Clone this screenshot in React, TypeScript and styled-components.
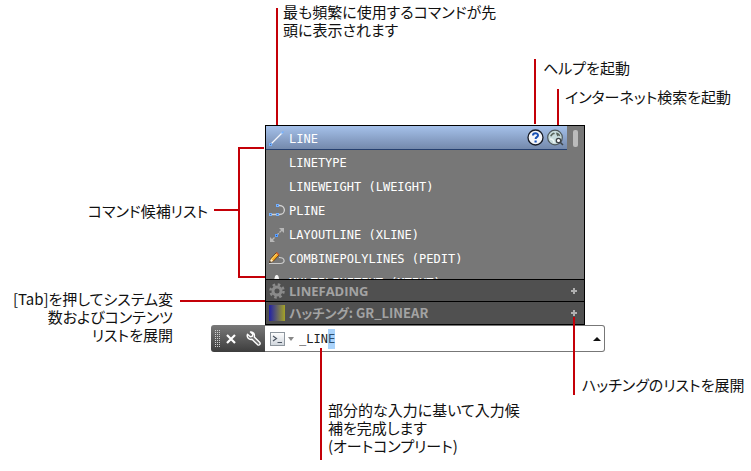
import React, { useEffect, useRef } from "react";
import styled, { createGlobalStyle } from "styled-components";

const RED = "#c40008";

const GlobalStyle = createGlobalStyle`
  *, *::before, *::after { box-sizing: border-box; }
  body { margin: 0; background: #fff; }
`;

const Figure = styled.main`
  position: relative;
  min-height: 471px;
  padding: 125px 0 0 211px;
  overflow: hidden;
  font-family: "Noto Sans CJK JP", sans-serif;
`;

const SuggestionPanel = styled.section`
  width: 320px;
  margin-left: 54px;
  border: 1px solid #000;
  background: #000;
  display: flex;
  flex-direction: column;
  gap: 1px;
`;

const ListArea = styled.div`
  display: flex;
  height: 153px;
  background: #777;
  overflow: hidden;
`;

const CommandList = styled.ul`
  flex: 1;
  margin: 0;
  padding: 0;
  list-style: none;
`;

const CommandRow = styled.li<{ $active?: boolean }>`
  display: flex;
  align-items: center;
  height: 24px;
  padding-right: 3px;
  background: ${(p) => (p.$active ? "linear-gradient(#a5c1ea, #7489ac)" : "transparent")};
  border-bottom: 1px solid ${(p) => (p.$active ? "#26406f" : "transparent")};
`;

const CommandButton = styled.button`
  flex: 1;
  display: flex;
  align-items: center;
  height: 100%;
  padding: 3px 0 0;
  border: 0;
  background: none;
  color: #fff;
  font: 12px/20px "DejaVu Sans Mono", monospace;
  text-align: left;
  white-space: pre;
`;

const IconSlot = styled.span`
  display: flex;
  width: 23px;
  padding-left: 3px;
`;

const RoundButton = styled.button`
  display: flex;
  padding: 0;
  margin-left: 3px;
  border: 0;
  background: none;
`;

const Scrollbar = styled.div`
  width: 17px;
  padding: 4px 6px 0 6px;
`;

const Thumb = styled.div`
  width: 5px;
  height: 17px;
  border-radius: 2px;
  background: #bbb;
`;

const CategoryRow = styled.button<{ $japanese?: boolean }>`
  display: flex;
  align-items: center;
  height: ${(p) => (p.$japanese ? 22 : 21)}px;
  padding: 0 6px 0 3px;
  border: 0;
  background: #505050;
  color: #a3a3a3;
  font: 700 13px/20px ${(p) => (p.$japanese ? '"Noto Sans CJK JP"' : '"Open Sans"')}, sans-serif;
  font-feature-settings: "palt";
  text-align: left;

  & > span { flex: 1; margin-left: 4px; }
`;

const CommandBar = styled.form`
  display: flex;
  width: 394px;
  height: 27px;
  border-radius: 3px;
`;

const BarTools = styled.div`
  display: flex;
  align-items: center;
  width: 54px;
  padding-left: 4px;
  border-radius: 3px 0 0 3px;
  background: linear-gradient(#797979, #3d3d3d);
`;

const ToolButton = styled.button<{ $gap: number }>`
  display: flex;
  padding: 0;
  margin-left: ${(p) => p.$gap}px;
  border: 0;
  background: none;
`;

const Entry = styled.div`
  flex: 1;
  display: flex;
  align-items: center;
  min-width: 0;
  padding: 0 3px 0 5px;
  border: 1px solid #777;
  border-left: 0;
  border-radius: 0 3px 3px 0;
  background: #fff;
`;

const CommandInput = styled.input`
  flex: 1;
  min-width: 0;
  height: 20px;
  margin-left: 5px;
  padding: 0;
  border: 0;
  outline: 0;
  background: none;
  color: #222;
  font: 12px/20px "DejaVu Sans Mono", monospace;

  &::selection { background: #a9d3fb; color: #31506f; }
`;

const Callout = styled.p<{ $x: number; $y: number; $w: number; $end?: boolean }>`
  position: absolute;
  left: ${(p) => p.$x}px;
  top: ${(p) => p.$y}px;
  width: ${(p) => p.$w}px;
  margin: 0;
  color: #111;
  font-size: 15px;
  line-height: 18px;
  font-feature-settings: "palt";
  text-align: ${(p) => (p.$end ? "right" : "left")};
  white-space: nowrap;
`;

const Leaders = styled.svg`
  position: absolute;
  left: 0;
  top: 0;
  pointer-events: none;
`;

const Svg = ({ w, h, children }: { w: number; h: number; children: React.ReactNode }) => (
  <svg width={w} height={h} viewBox={`0 0 ${w} ${h}`} aria-hidden="true">{children}</svg>
);

const Node = ({ x, y }: { x: number; y: number }) => (
  <rect x={x + 0.5} y={y + 0.5} width="2" height="2" fill="#4a6ea8" stroke="#75b1ff" />
);

const LineIcon = () => (
  <Svg w={16} h={16}>
    <path d="M2.5 12.5 13.5 1.500" stroke="#f6f8fc" strokeWidth="1.2" />
    <Node x={0} y={12} />
    <path d="M12.500 2.500l2-2" stroke="#75b1ff" strokeWidth="1.5" />
  </Svg>
);

const PlineIcon = () => (
  <Svg w={16} h={16}>
    <path d="M2 11.5H10.500C17 11.500 17 2.500 10.500 2.500H8" fill="none" stroke="#d2d2d2" strokeWidth="1.3" />
    <Node x={0} y={10} /><Node x={7} y={10} /><Node x={7} y={1} />
  </Svg>
);

const XlineIcon = () => (
  <Svg w={16} h={16}>
    <path d="M2 14 14 2" stroke="#b7b7b7" strokeWidth="1.3" strokeDasharray="5 1" />
    <path d="M10 1h5v5zM1 10v5h5z" fill="#b7b7b7" />
    <rect x="6.5" y="7.5" width="2" height="2" fill="#1c55ac" stroke="#5ba0ff" />
  </Svg>
);

const PeditIcon = () => (
  <Svg w={16} h={16}>
    <path d="M0 12.500H11.500C17 12 16 6.500 10 6.500" fill="none" stroke="#ccc" strokeWidth="1.2" />
    <path d="M.5 11.500 2 7.500 7.500 1.500 10 4 4.500 10z" fill="#f7aa20" stroke="#5a2c05" strokeWidth=".8" />
    <path d="M2.700 8 7.800 2.500" stroke="#ffe58a" />
    <path d="M7 2 8 1 10.500 3.500 9.500 4.500z" fill="#c45a32" />
    <path d="M.5 11.500 2 7.800 4.300 10z" fill="#fff0cf" />
    <path d="M0 12l1-2 1 1z" fill="#111" />
  </Svg>
);

const TextIcon = () => (
  <Svg w={16} h={16}><path d="M2 16 6 1.500C6.500-.5 9-.5 9.500 1.500L13 16z" fill="#f4f4f4" /></Svg>
);

const HelpIcon = () => (
  <Svg w={17} h={17}>
    <circle cx="8.500" cy="8.500" r="7.500" fill="#f4f6fa" stroke="#171b25" strokeWidth="1.300" />
    <path d="M6 6.500C6 3.500 11 3.500 11 6.300 11 8.300 8.600 8 8.600 10" fill="none" stroke="#1750b5" strokeWidth="2" />
    <rect x="7.500" y="11.500" width="2.200" height="2" fill="#1750b5" />
  </Svg>
);

const GlobeIcon = () => (
  <Svg w={17} h={17}>
    <circle cx="8" cy="8.500" r="7.300" fill="#c8dcdd" stroke="#4e585c" strokeWidth="1.200" />
    <path d="M3 7C4 5 5 4 7 3.500L8 5 6 5.500 4.500 7.500zM9 3.500c2 0 4 1.500 4.500 4l-2-1-1 1-1-2z" fill="#58645c" />
    <path d="M3 10c2 0 4 1 4 4" stroke="#edf7f4" fill="none" strokeWidth="1.500" />
    <circle cx="11.500" cy="11.500" r="2.200" fill="#fff" stroke="#3d4348" strokeWidth="1.300" />
    <path d="m13 13 3 3" stroke="#3d4348" strokeWidth="1.500" />
  </Svg>
);

const GearIcon = () => (
  <Svg w={16} h={16}>
    <circle cx="8" cy="8" r="6.500" fill="none" stroke="#8b8b8b" strokeWidth="2.500" strokeDasharray="2.550 2.550" />
    <circle cx="8" cy="8" r="4" fill="none" stroke="#8b8b8b" strokeWidth="3" />
  </Svg>
);

const HatchIcon = () => (
  <Svg w={16} h={16}>
    <defs><linearGradient id="hatch"><stop stopColor="#2020a8" /><stop offset="1" stopColor="#a5a326" /></linearGradient></defs>
    <rect width="16" height="16" fill="url(#hatch)" />
  </Svg>
);

const PlusIcon = () => (
  <Svg w={8} h={8}><path d="M4 1v6M1 4h6" stroke="#b0b0b0" strokeWidth="2" /></Svg>
);

const GripIcon = () => (
  <Svg w={6} h={18}>
    {[0, 2, 4].flatMap((x) => [0, 2, 4, 6, 8, 10, 12, 14, 16].map((y) => (
      <rect key={`${x}-${y}`} x={x} y={y} width="1" height="1" fill="#d0d0d0" />
    )))}
  </Svg>
);

const CloseIcon = () => (
  <Svg w={10} h={10}><path d="m1 1 8 8m0-8-8 8" stroke="#fff" strokeWidth="2.200" /></Svg>
);

const WrenchIcon = () => (
  <Svg w={15} h={15}>
    <path d="M4.500 1 6.800 3.300 6.300 5.300 4.300 5.800 1.500 3.200C.3 6.300 3 9 6 8.300L11.700 13.800c1.700 1 3-.7 2.200-2.200L8.300 6C9 3 7.200.5 4.500 1z" fill="#707070" stroke="#fff" strokeWidth="1.400" strokeLinejoin="round" />
  </Svg>
);

const PromptIcon = () => (
  <Svg w={15} h={14}>
    <defs><linearGradient id="prompt" x2="0" y2="1"><stop stopColor="#fff" /><stop offset="1" stopColor="#cfd5dc" /></linearGradient></defs>
    <rect x=".5" y=".5" width="14" height="13" fill="url(#prompt)" stroke="#8e969e" />
    <path d="m3 4 3.500 2.500L3 9M7.500 10.500H12" fill="none" stroke="#4c5663" strokeWidth="1.200" />
  </Svg>
);

const commands = [
  { name: "LINE", icon: <LineIcon />, active: true },
  { name: "LINETYPE" },
  { name: "LINEWEIGHT (LWEIGHT)" },
  { name: "PLINE", icon: <PlineIcon /> },
  { name: "LAYOUTLINE (XLINE)", icon: <XlineIcon /> },
  { name: "COMBINEPOLYLINES (PEDIT)", icon: <PeditIcon /> },
  { name: "MULTILINETEXT (MTEXT)", icon: <TextIcon /> },
];

export default function App() {
  const input = useRef<HTMLInputElement>(null);
  useEffect(() => {
    input.current?.focus();
    input.current?.setSelectionRange(4, 5);
  }, []);

  return (
    <>
      <GlobalStyle />
      <Figure lang="ja">
        <SuggestionPanel>
          <ListArea>
            <CommandList>
              {commands.map((c) => (
                <CommandRow key={c.name} $active={c.active}>
                  <CommandButton type="button"><IconSlot>{c.icon}</IconSlot>{c.name}</CommandButton>
                  {c.active && (
                    <>
                      <RoundButton type="button" aria-label="ヘルプ"><HelpIcon /></RoundButton>
                      <RoundButton type="button" aria-label="インターネット検索"><GlobeIcon /></RoundButton>
                    </>
                  )}
                </CommandRow>
              ))}
            </CommandList>
            <Scrollbar><Thumb /></Scrollbar>
          </ListArea>
          <CategoryRow type="button"><GearIcon /><span>LINEFADING</span><PlusIcon /></CategoryRow>
          <CategoryRow type="button" $japanese><HatchIcon /><span>ハッチング: GR_LINEAR</span><PlusIcon /></CategoryRow>
        </SuggestionPanel>

        <CommandBar onSubmit={(e) => e.preventDefault()}>
          <BarTools>
            <GripIcon />
            <ToolButton type="button" $gap={5} aria-label="閉じる"><CloseIcon /></ToolButton>
            <ToolButton type="button" $gap={10} aria-label="カスタマイズ"><WrenchIcon /></ToolButton>
          </BarTools>
          <Entry>
            <PromptIcon />
            <ToolButton type="button" $gap={3} aria-label="最近使用したコマンド">
              <Svg w={6} h={4}><path d="M0 0h6L3 4z" fill="#888" /></Svg>
            </ToolButton>
            <CommandInput ref={input} aria-label="コマンド" defaultValue="_LINE" spellCheck={false} />
            <ToolButton type="button" $gap={0} aria-label="履歴">
              <Svg w={8} h={4}><path d="M0 4h8L4 0z" fill="#111" /></Svg>
            </ToolButton>
          </Entry>
        </CommandBar>

        <Leaders width="751" height="471" fill="none" stroke={RED} strokeWidth="2" aria-hidden="true">
          <path d="M277 8V125M535 59V124M558 89V125M214 210H239M264 148H239V277H265M180 301H265M574 317V395M321 348V460" />
        </Leaders>

        <Callout $x={283} $y={3} $w={220}>最も頻繁に使用するコマンドが先<br />頭に表示されます</Callout>
        <Callout $x={543} $y={59} $w={100}>ヘルプを起動</Callout>
        <Callout $x={565} $y={88} $w={170}>インターネット検索を起動</Callout>
        <Callout $x={82} $y={202} $w={126} $end>コマンド候補リスト</Callout>
        <Callout $x={2} $y={290} $w={171} $end>[Tab]を押してシステム変<br />数およびコンテンツ<br />リストを展開</Callout>
        <Callout $x={582} $y={376} $w={169}>ハッチングのリストを展開</Callout>
        <Callout $x={328} $y={401} $w={200}>部分的な入力に基いて入力候<br />補を完成します<br />(オートコンプリート)</Callout>
      </Figure>
    </>
  );
}
